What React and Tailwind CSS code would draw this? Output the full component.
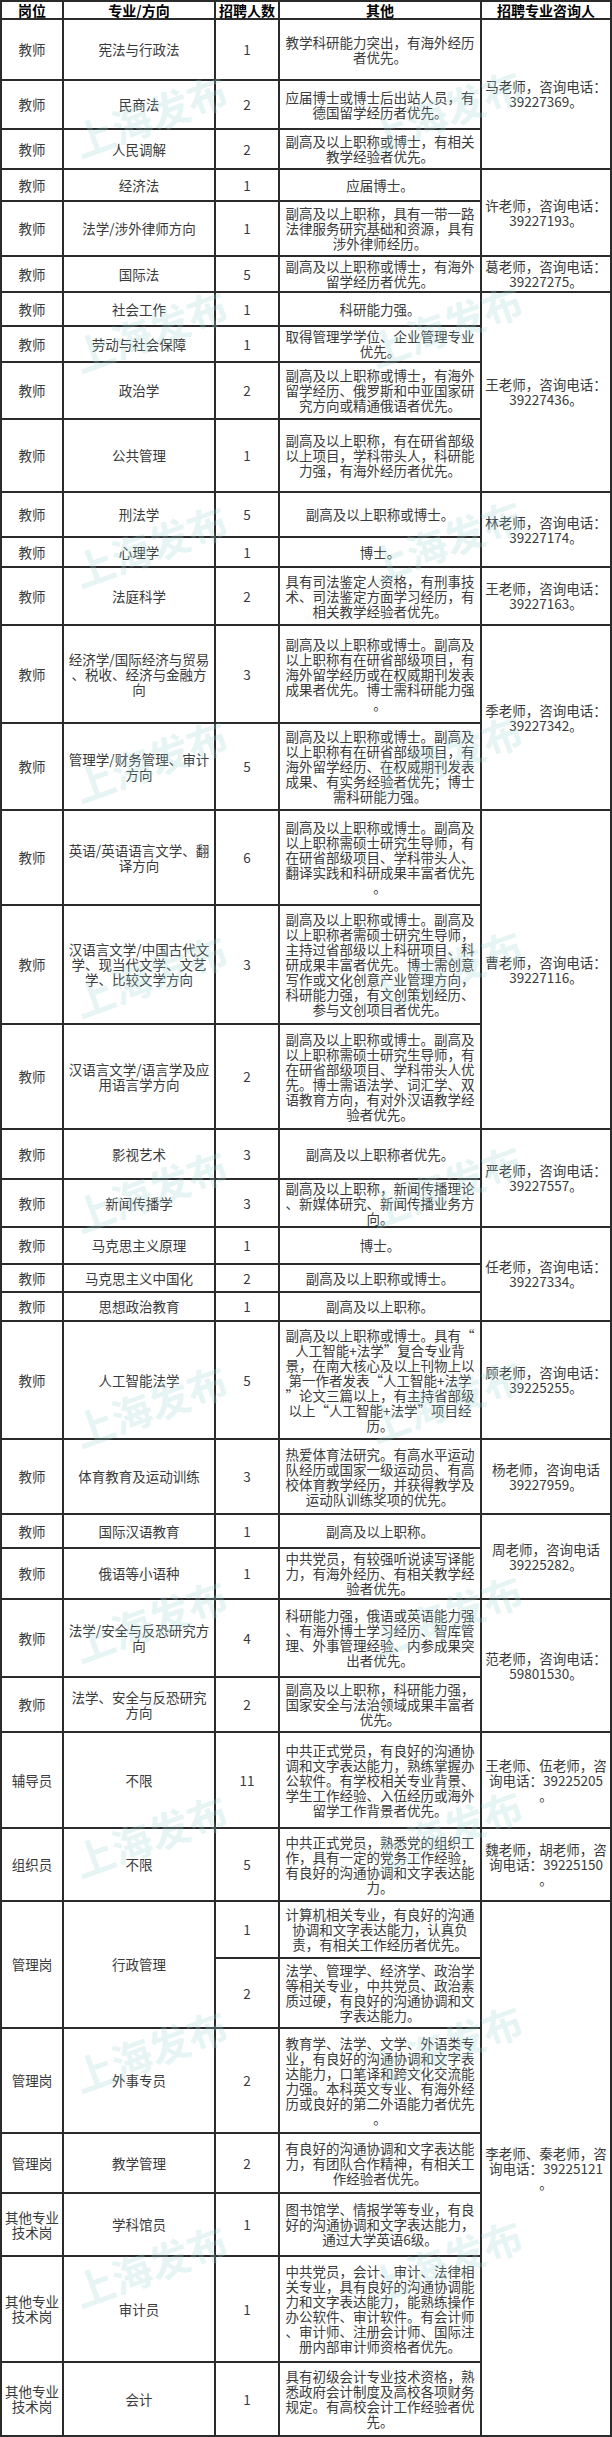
import React from "react";

const C = (a, b) => ({ lines: [a, b], span: 1 });

const rows = [
  { pos: ["教师"], major: ["宪法与行政法"], n: "1", other: ["教学科研能力突出，有海外经历", "者优先。"], contact: { lines: ["马老师，咨询电话：", "39227369。"], span: 3 } },
  { pos: ["教师"], major: ["民商法"], n: "2", other: ["应届博士或博士后出站人员，有", "德国留学经历者优先。"] },
  { pos: ["教师"], major: ["人民调解"], n: "2", other: ["副高及以上职称或博士，有相关", "教学经验者优先。"] },
  { pos: ["教师"], major: ["经济法"], n: "1", other: ["应届博士。"], contact: { lines: ["许老师，咨询电话：", "39227193。"], span: 2 } },
  { pos: ["教师"], major: ["法学/涉外律师方向"], n: "1", other: ["副高及以上职称，具有一带一路", "法律服务研究基础和资源，具有", "涉外律师经历。"] },
  { pos: ["教师"], major: ["国际法"], n: "5", other: ["副高及以上职称或博士，有海外", "留学经历者优先。"], contact: C("葛老师，咨询电话：", "39227275。") },
  { pos: ["教师"], major: ["社会工作"], n: "1", other: ["科研能力强。"], contact: { lines: ["王老师，咨询电话：", "39227436。"], span: 4 } },
  { pos: ["教师"], major: ["劳动与社会保障"], n: "1", other: ["取得管理学学位、企业管理专业", "优先。"] },
  { pos: ["教师"], major: ["政治学"], n: "2", other: ["副高及以上职称或博士，有海外", "留学经历、俄罗斯和中亚国家研", "究方向或精通俄语者优先。"] },
  { pos: ["教师"], major: ["公共管理"], n: "1", other: ["副高及以上职称，有在研省部级", "以上项目，学科带头人，科研能", "力强，有海外经历者优先。"] },
  { pos: ["教师"], major: ["刑法学"], n: "5", other: ["副高及以上职称或博士。"], contact: { lines: ["林老师，咨询电话：", "39227174。"], span: 2 } },
  { pos: ["教师"], major: ["心理学"], n: "1", other: ["博士。"] },
  { pos: ["教师"], major: ["法庭科学"], n: "2", other: ["具有司法鉴定人资格，有刑事技", "术、司法鉴定方面学习经历，有", "相关教学经验者优先。"], contact: C("王老师，咨询电话：", "39227163。") },
  { pos: ["教师"], major: ["经济学/国际经济与贸易", "、税收、经济与金融方", "向"], n: "3", other: ["副高及以上职称或博士。副高及", "以上职称有在研省部级项目，有", "海外留学经历或在权威期刊发表", "成果者优先。博士需科研能力强", "。"], contact: { lines: ["季老师，咨询电话：", "39227342。"], span: 2 } },
  { pos: ["教师"], major: ["管理学/财务管理、审计", "方向"], n: "5", other: ["副高及以上职称或博士。副高及", "以上职称有在研省部级项目，有", "海外留学经历、在权威期刊发表", "成果、有实务经验者优先；博士", "需科研能力强。"] },
  { pos: ["教师"], major: ["英语/英语语言文学、翻", "译方向"], n: "6", other: ["副高及以上职称或博士。副高及", "以上职称需硕士研究生导师，有", "在研省部级项目、学科带头人、", "翻译实践和科研成果丰富者优先", "。"], contact: { lines: ["曹老师，咨询电话：", "39227116。"], span: 3 } },
  { pos: ["教师"], major: ["汉语言文学/中国古代文", "学、现当代文学、文艺", "学、比较文学方向"], n: "3", other: ["副高及以上职称或博士。副高及", "以上职称者需硕士研究生导师，", "主持过省部级以上科研项目、科", "研成果丰富者优先。博士需创意", "写作或文化创意产业管理方向，", "科研能力强，有文创策划经历、", "参与文创项目者优先。"] },
  { pos: ["教师"], major: ["汉语言文学/语言学及应", "用语言学方向"], n: "2", other: ["副高及以上职称或博士。副高及", "以上职称需硕士研究生导师，有", "在研省部级项目、学科带头人优", "先。博士需语法学、词汇学、双", "语教育方向，有对外汉语教学经", "验者优先。"] },
  { pos: ["教师"], major: ["影视艺术"], n: "3", other: ["副高及以上职称者优先。"], contact: { lines: ["严老师，咨询电话：", "39227557。"], span: 2 } },
  { pos: ["教师"], major: ["新闻传播学"], n: "3", other: ["副高及以上职称，新闻传播理论", "、新媒体研究、新闻传播业务方", "向。"] },
  { pos: ["教师"], major: ["马克思主义原理"], n: "1", other: ["博士。"], contact: { lines: ["任老师，咨询电话：", "39227334。"], span: 3 } },
  { pos: ["教师"], major: ["马克思主义中国化"], n: "2", other: ["副高及以上职称或博士。"] },
  { pos: ["教师"], major: ["思想政治教育"], n: "1", other: ["副高及以上职称。"] },
  { pos: ["教师"], major: ["人工智能法学"], n: "5", other: ["副高及以上职称或博士。具有“", "人工智能+法学”复合专业背", "景，在南大核心及以上刊物上以", "第一作者发表“人工智能+法学", "”论文三篇以上，有主持省部级", "以上“人工智能+法学”项目经", "历。"], contact: C("顾老师，咨询电话：", "39225255。") },
  { pos: ["教师"], major: ["体育教育及运动训练"], n: "3", other: ["热爱体育法研究。有高水平运动", "队经历或国家一级运动员、有高", "校体育教学经历，并获得教学及", "运动队训练奖项的优先。"], contact: C("杨老师，咨询电话", "39227959。") },
  { pos: ["教师"], major: ["国际汉语教育"], n: "1", other: ["副高及以上职称。"], contact: { lines: ["周老师，咨询电话", "39225282。"], span: 2 } },
  { pos: ["教师"], major: ["俄语等小语种"], n: "1", other: ["中共党员，有较强听说读写译能", "力，有海外经历、有相关教学经", "验者优先。"] },
  { pos: ["教师"], major: ["法学/安全与反恐研究方", "向"], n: "4", other: ["科研能力强，俄语或英语能力强", "、有海外博士学习经历、智库管", "理、外事管理经验、内参成果突", "出者优先。"], contact: { lines: ["范老师，咨询电话：", "59801530。"], span: 2 } },
  { pos: ["教师"], major: ["法学、安全与反恐研究", "方向"], n: "2", other: ["副高及以上职称，科研能力强，", "国家安全与法治领域成果丰富者", "优先。"] },
  { pos: ["辅导员"], major: ["不限"], n: "11", other: ["中共正式党员，有良好的沟通协", "调和文字表达能力，熟练掌握办", "公软件。有学校相关专业背景、", "学生工作经验、入伍经历或海外", "留学工作背景者优先。"], contact: { lines: ["王老师、伍老师，咨", "询电话：39225205", "。"], span: 1 } },
  { pos: ["组织员"], major: ["不限"], n: "5", other: ["中共正式党员，熟悉党的组织工", "作，具有一定的党务工作经验，", "有良好的沟通协调和文字表达能", "力。"], contact: { lines: ["魏老师，胡老师，咨", "询电话：39225150", "。"], span: 1 } },
  { pos: ["管理岗"], major: ["行政管理"], span2: true, n: "1", other: ["计算机相关专业，有良好的沟通", "协调和文字表达能力，认真负", "责，有相关工作经历者优先。"], contact: { lines: ["李老师、秦老师，咨", "询电话：39225121", "。"], span: 7 } },
  { skipLeft: true, n: "2", other: ["法学、管理学、经济学、政治学", "等相关专业，中共党员、政治素", "质过硬，有良好的沟通协调和文", "字表达能力。"] },
  { pos: ["管理岗"], major: ["外事专员"], n: "2", other: ["教育学、法学、文学、外语类专", "业，有良好的沟通协调和文字表", "达能力，口笔译和跨文化交流能", "力强。本科英文专业、有海外经", "历或良好的第二外语能力者优先", "。"] },
  { pos: ["管理岗"], major: ["教学管理"], n: "2", other: ["有良好的沟通协调和文字表达能", "力，有团队合作精神，有相关工", "作经验者优先。"] },
  { pos: ["其他专业", "技术岗"], major: ["学科馆员"], n: "1", other: ["图书馆学、情报学等专业，有良", "好的沟通协调和文字表达能力，", "通过大学英语6级。"] },
  { pos: ["其他专业", "技术岗"], major: ["审计员"], n: "1", other: ["中共党员，会计、审计、法律相", "关专业，具有良好的沟通协调能", "力和文字表达能力，能熟练操作", "办公软件、审计软件。有会计师", "、审计师、注册会计师、国际注", "册内部审计师资格者优先。"] },
  { pos: ["其他专业", "技术岗"], major: ["会计"], n: "1", other: ["具有初级会计专业技术资格，熟", "悉政府会计制度及高校各项财务", "规定。有高校会计工作经验者优", "先。"] },
];

const spanClass = {
  1: "row-span-1",
  2: "row-span-2",
  3: "row-span-3",
  4: "row-span-4",
  7: "row-span-7",
};

const cell =
  "flex flex-col items-center justify-center text-center whitespace-nowrap border-r-2 border-b-2 border-[#2b2b2b] px-0.5";

function Cell({ items, span = 1, className = "" }) {
  return (
    <div className={`${cell} ${spanClass[span]} ${className}`}>
      {items.map((t, i) => (
        <div key={i} className="leading-[15px]">
          {t}
        </div>
      ))}
    </div>
  );
}

// faint diagonal "上海发布" marks over the sheet
const marks = Array.from({ length: 11 }, (_, i) => i);

export default function App() {
  return (
    <div className="relative w-[612px] bg-white font-['Noto_Sans_CJK_SC',sans-serif] text-[13.5px] text-[#3a3a3a]">
      <div className="grid grid-cols-[62px_152px_64px_202px_130px] grid-rows-[18px_61px_49px_40px_32px_55px_36px_34px_36px_57px_73px_45px_30px_58px_98px_87px_95px_119px_105px_50px_48px_37px_28px_29px_118px_75px_34px_51px_78px_55px_96px_73px_57px_70px_105px_60px_63px_106px_74px] border-t-2 border-l-2 border-[#2b2b2b]">
        {["岗位", "专业/方向", "招聘人数", "其他", "招聘专业咨询人"].map((t) => (
          <Cell key={t} items={[t]} className="text-[14px] font-bold text-black" />
        ))}
        {rows.map((r, i) => (
          <React.Fragment key={i}>
            {!r.skipLeft && <Cell items={r.pos} span={r.span2 ? 2 : 1} />}
            {!r.skipLeft && <Cell items={r.major} span={r.span2 ? 2 : 1} />}
            <Cell items={[r.n]} />
            <Cell items={r.other} />
            {r.contact && <Cell items={r.contact.lines} span={r.contact.span} />}
          </React.Fragment>
        ))}
      </div>

      <div className="pointer-events-none absolute inset-0 overflow-hidden">
        {marks.map((i) => (
          <React.Fragment key={i}>
            <div
              className="absolute -rotate-[20deg] text-[40px] font-bold text-[#9fd6d6] opacity-25"
              style={{ left: 70, top: 85 + i * 215 }}
            >
              上海发布
            </div>
            <div
              className="absolute -rotate-[20deg] text-[40px] font-bold text-[#9fd6d6] opacity-25"
              style={{ left: 365, top: 80 + i * 215 }}
            >
              上海发布
            </div>
          </React.Fragment>
        ))}
      </div>
    </div>
  );
}
